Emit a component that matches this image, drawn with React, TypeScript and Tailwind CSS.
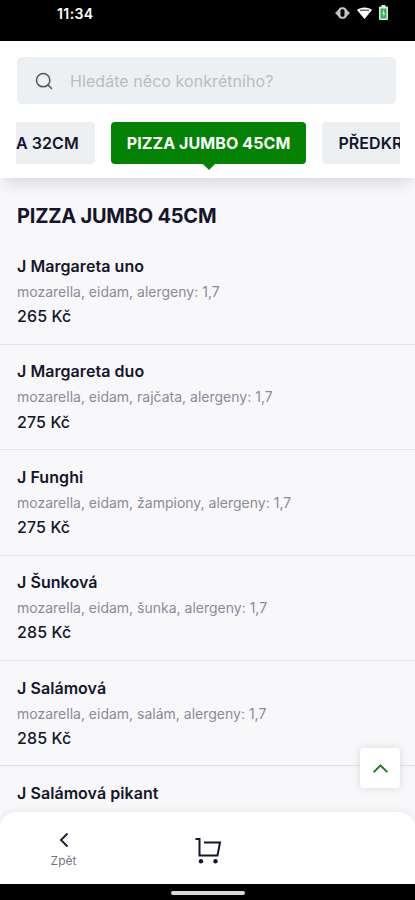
import React, { useState } from 'react';
import { ChevronUp, Search } from 'lucide-react';

interface MenuItem {
  name: string;
  description?: string;
  price?: string;
}

const CATEGORIES = ['PIZZA 32CM', 'PIZZA JUMBO 45CM', 'PŘEDKRMY'];

const MENU: MenuItem[] = [
  { name: 'J Margareta uno', description: 'mozarella, eidam, alergeny: 1,7', price: '265 Kč' },
  { name: 'J Margareta duo', description: 'mozarella, eidam, rajčata, alergeny: 1,7', price: '275 Kč' },
  { name: 'J Funghi', description: 'mozarella, eidam, žampiony, alergeny: 1,7', price: '275 Kč' },
  { name: 'J Šunková', description: 'mozarella, eidam, šunka, alergeny: 1,7', price: '285 Kč' },
  { name: 'J Salámová', description: 'mozarella, eidam, salám, alergeny: 1,7', price: '285 Kč' },
  { name: 'J Salámová pikant' },
];

const StatusBar: React.FC = () => (
  <div className="flex h-[41px] shrink-0 items-start justify-between bg-black pl-[57px] pr-[27px] text-white">
    <span className="pt-[4px] text-[14px] font-semibold leading-[20px] tracking-[0.4px]">11:34</span>
    <div className="flex items-center gap-[7px] pt-[5px]">
      {/* vibrate */}
      <svg width="15" height="14" viewBox="0 0 15 14">
        <path d="M4.500 2.500 0 7l4.500 4.500zM10.500 2.500 15 7l-4.500 4.500z" fill="#bdbdbd" />
        <rect x="4.500" y="2.300" width="6" height="9.400" rx="2.500" fill="#000" stroke="#c8c8c8" strokeWidth="2" />
      </svg>
      {/* wifi */}
      <svg width="15" height="14" viewBox="0 0 15 14">
        <path d="M0 4C3 .500 12 .500 15 4L7.500 13z" fill="#fff" />
        <path d="M3 4.200h9" stroke="#444" strokeWidth="1.200" />
      </svg>
      {/* battery */}
      <svg width="9" height="15" viewBox="0 0 9 15">
        <path d="M2.500 0h4v1.500H8a1 1 0 0 1 1 1V14a1 1 0 0 1-1 1H1a1 1 0 0 1-1-1V2.500a1 1 0 0 1 1-1h1.500z" fill="#dfeae0" />
        <path d="M1.500 3.500h6v10h-6z" fill="#2fb457" />
        <path d="M5 4.500 3 9h1.400v3L6.200 8H5z" fill="#d9f5df" />
      </svg>
    </div>
  </div>
);

const CartIcon: React.FC = () => (
  <svg width="28" height="28" viewBox="0 0 28 28" fill="none" stroke="#15152b" strokeWidth="2">
    <path d="M1.500 3H5.500V19.500H23.500L26 6.500H10" />
    <circle cx="7" cy="25.300" r="2.200" fill="#15152b" stroke="none" />
    <circle cx="21.500" cy="25.300" r="2.200" fill="#15152b" stroke="none" />
  </svg>
);

const App: React.FC = () => {
  const [active, setActive] = useState<string>('PIZZA JUMBO 45CM');

  return (
    <div className="relative flex h-[900px] w-[415px] flex-col overflow-hidden bg-[#f8f8fb] font-['Inter',sans-serif] text-[#15152b]">
      <StatusBar />

      <header className="relative z-10 h-[137px] shrink-0 bg-white pt-4 shadow-[0_11px_14px_-5px_rgba(0,0,0,0.12)]">
        <label className="ml-[17px] flex h-[47px] w-[379px] items-center rounded-[5px] bg-[#ecf0f3] pl-[17px]">
          <Search size={20} strokeWidth={1.8} className="shrink-0 text-[#55555f]" />
          <input
            className="ml-[16px] w-full bg-transparent text-[16px] tracking-[0.06px] outline-none placeholder:text-[#b9bdc1]"
            placeholder="Hledáte něco konkrétního?"
          />
        </label>

        <div className="ml-[16px] mt-[18px] flex h-[50px] w-[384px] items-start overflow-hidden">
          <div className="-ml-[52px] flex gap-4">
            {CATEGORIES.map((category) => (
              <button
                key={category}
                onClick={() => setActive(category)}
                className={`relative h-[42px] shrink-0 whitespace-nowrap rounded-[4px] px-4 text-[16px] tracking-[0.08px] ${
                  active === category ? 'bg-[#038203] font-bold text-white' : 'bg-[#ecf0f3] font-semibold'
                }`}
              >
                {category}
                {active === category && (
                  <span className="absolute -bottom-[4px] left-1/2 h-[10px] w-[10px] -translate-x-1/2 rotate-45 bg-[#038203]" />
                )}
              </button>
            ))}
          </div>
        </div>
      </header>

      <main className="min-h-0 flex-1 overflow-hidden">
        <h1 className="pl-[17px] pt-[24px] text-[20px] font-bold leading-[28px] tracking-[-0.22px]">PIZZA JUMBO 45CM</h1>
        <ul className="pt-[9.4px]">
          {MENU.map((item) => (
            <li key={item.name} className="h-[105.4px] border-b border-[#e4e4e8] pl-[17px] pt-[15.6px]">
              <h2 className="text-[16px] font-semibold leading-[22px] tracking-[0.06px]">{item.name}</h2>
              {item.description && (
                <p className="mt-[4px] text-[14px] leading-[22px] text-[#8b8b96]">{item.description}</p>
              )}
              {item.price && <p className="mt-[2.2px] text-[16px] font-medium leading-[23px] tracking-[0.1px]">{item.price}</p>}
            </li>
          ))}
        </ul>
      </main>

      <button className="absolute right-[15px] top-[748px] flex h-10 w-10 items-center justify-center rounded-[4px] bg-white shadow-[0_0_8px_rgba(0,0,0,0.13)]">
        <ChevronUp size={25} strokeWidth={2} className="text-[#1c7c24]" />
      </button>

      <nav className="relative grid h-[72px] shrink-0 grid-cols-[127px_162px_1fr] rounded-t-[16px] bg-white shadow-[0_0_10px_rgba(0,0,0,0.08)]">
        <button className="flex flex-col items-center pt-[20px]">
          <svg width="10" height="16" viewBox="0 0 10 16" fill="none" stroke="#15152b" strokeWidth="1.8">
            <path d="M8.500 1.500 2 8l6.500 6.500" />
          </svg>
          <span className="mt-[5px] text-[12px] leading-[16px] text-[#777780]">Zpět</span>
        </button>
        <button className="flex items-start justify-center pt-[24px]">
          <CartIcon />
        </button>
      </nav>

      <div className="flex h-4 shrink-0 justify-center bg-black pt-[7px]">
        <div className="h-[4px] w-[74px] rounded-full bg-[#d8d8d8]" />
      </div>
    </div>
  );
};

export default App;
